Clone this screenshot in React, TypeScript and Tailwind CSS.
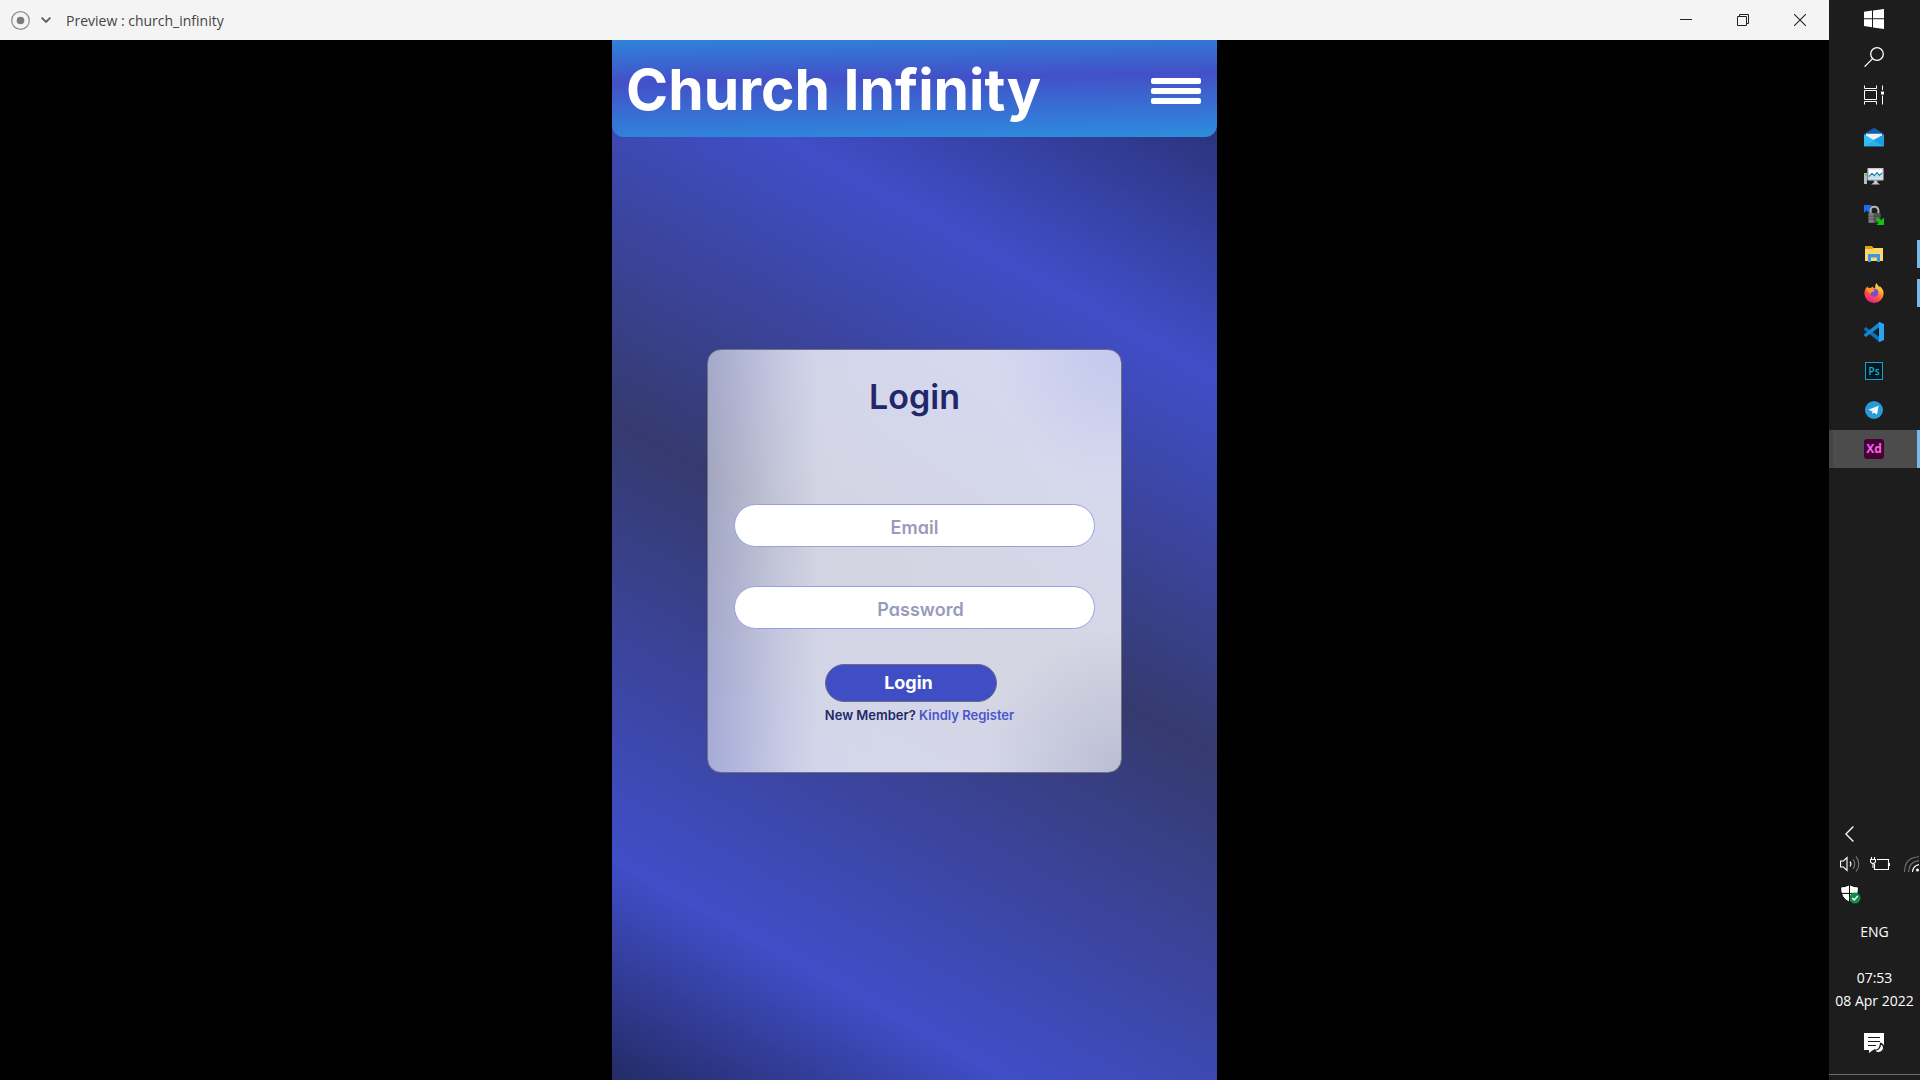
import type { ReactNode } from "react";

const StartIcon = () => (
  <svg width="20" height="20" viewBox="0 0 20 20" fill="#fff">
    <path d="M0 2.8 8 1.6V9.3H0ZM9 1.5 20 0V9.3H9ZM0 10.3H8V18.2L0 17.1ZM9 10.3H20V20L9 18.4Z" />
  </svg>
);

const SearchIcon = () => (
  <svg width="20" height="20" viewBox="0 0 20 20" fill="none" stroke="#fff" strokeWidth="1.3">
    <circle cx="13" cy="7" r="6.3" />
    <path d="M8.6 11.6.6 19.6" />
  </svg>
);

const TaskViewIcon = () => (
  <svg width="20" height="20" viewBox="0 0 20 20" fill="none" stroke="#fff" strokeWidth="1">
    <path d="M.5.5V3.5H12.5V.5M.5 19.5V16.5H12.5V19.5M.5 5.5H12.5V14.5H.5ZM18.5.5V5M18.5 10.5V19.5" />
    <rect x="17" y="6.5" width="3" height="3" fill="#fff" stroke="none" />
  </svg>
);

const MailIcon = () => (
  <svg width="20" height="20" viewBox="0 0 20 20">
    <path d="M0 7 10 .8 20 7V10H0Z" fill="#0f5fae" />
    <path d="M2 6.8H18V12L10 16 2 12Z" fill="#f1f1f1" />
    <path d="M0 7.2 20 19.2H0Z" fill="#33bdf2" />
    <path d="M20 7.2V19.2L9 13.2Z" fill="#1c9de4" />
    <path d="M20 19.2H0L10 13.4Z" fill="#2cb0ee" />
  </svg>
);

const MonitorIcon = () => (
  <svg width="20" height="20" viewBox="0 0 20 20">
    <rect x="0" y="7" width="3" height="11" fill="#b9bcbc" />
    <rect x="1" y="8" width="2" height="1.2" fill="#35c92c" />
    <rect x="3.4" y="2" width="16.2" height="12.4" rx="0.8" fill="#c7c9ca" />
    <rect x="4.8" y="3.4" width="13.4" height="9.4" fill="#fff" />
    <path d="M4.8 9.6 7.8 6.6 10.6 9.4 12.6 7.4 15 9.4 18.2 8V12.8H4.8Z" fill="#bfe3f5" />
    <path d="M4.8 10.6 8 7.4 10.4 9.6 13 6.6 15.4 9.4 18.2 6.8" fill="none" stroke="#1f78ad" strokeWidth="1.1" />
    <path d="M9.8 14.4H13.4V16.4L16 18.4H7L9.8 16.4Z" fill="#c4c6c7" />
  </svg>
);

const LockIcon = () => (
  <svg width="20" height="20" viewBox="0 0 20 20">
    <path d="M0 0H8L5.6 2.4 7.6 4.4 4.4 7.6 2.4 5.6 0 8Z" fill="#1a6cf0" />
    <path d="M6.6 9.5V5.2Q6.6 1.8 10.3 1.8T14.4 5.2V9.5" fill="none" stroke="#b4b4b4" strokeWidth="2" />
    <rect x="4.6" y="8" width="12" height="9.8" fill="#555" />
    <rect x="4.6" y="8" width="5" height="9.8" fill="#7d7d7d" />
    <path d="M4.6 11.2H16.6M4.6 14.2H16.6" stroke="#444" strokeWidth="0.6" />
    <path d="M13.6 12 17 15.2 20 12.4V20H12.4L14.8 17.4 11.6 14.4Z" fill="#10c410" />
  </svg>
);

const FolderIcon = () => (
  <svg width="20" height="20" viewBox="0 0 20 20">
    <path d="M1 2H8L9.6 4H19V8H1Z" fill="#e0a010" />
    <path d="M1 5H8L10 4H19V17H1Z" fill="#ffd766" />
    <path d="M4 18V10.6Q4 10 4.6 10H15.4Q16 10 16 10.6V18H13V13.4H7V18Z" fill="#3b97e3" />
  </svg>
);

const FirefoxIcon = () => (
  <svg width="20" height="20" viewBox="0 0 20 20">
    <defs>
      <linearGradient id="ffBody" x1="0.8" y1="0" x2="0.25" y2="1">
        <stop offset="0" stopColor="#fff14a" />
        <stop offset="0.35" stopColor="#ffa42a" />
        <stop offset="0.65" stopColor="#ff4c46" />
        <stop offset="1" stopColor="#e3189a" />
      </linearGradient>
    </defs>
    <path
      d="M3.4 3.2 4 5 7 5 8.2 3.4Q9.4 5 11 5.2 10.4 2.4 12.6 0 13.4 2.4 15.4 3.9L16 3.2Q19.6 6.4 19.6 10.6A9.6 9.4 0 0 1 .4 10.6Q.2 6.4 3.4 3.2Z"
      fill="url(#ffBody)"
    />
    <circle cx="10.2" cy="9.8" r="4.1" fill="#7a4be0" />
    <path d="M2 5.4Q4.6 4.2 7.4 5L10.8 7.6Q9.8 9 7.6 9 6.4 9.6 6.8 11.4 4 9 2 5.4Z" fill="#ff9a1f" />
  </svg>
);

const CodeIcon = () => (
  <svg width="20" height="20" viewBox="0 0 20 20">
    <path d="M0 6.6 1.8 5 15.4 15V20L.2 7.8Z" fill="#0a72bd" />
    <path d="M0 13.4 1.8 15 15.4 5V0L.2 12.2Z" fill="#1389d6" />
    <path d="M14.6.2 15.6 0 20 2V18L15.6 20 14.6 19.6 15 18.6V1.4Z" fill="#2ba4f3" />
  </svg>
);

const PhotoshopIcon = () => (
  <span className="flex h-[18px] w-[18px] items-center justify-center border border-[#14a5c8] bg-[#03181f] font-['Open_Sans',sans-serif] text-[10px] leading-none font-semibold text-[#16b4da]">
    Ps
  </span>
);

const TelegramIcon = () => (
  <svg width="18" height="18" viewBox="0 0 18 18">
    <circle cx="9" cy="9" r="9" fill="#279cd8" />
    <path d="M3.4 8.8 13.6 4.8 12 13.4 9 11.4 7.4 13 7 10.2Z" fill="#fff" />
    <path d="M7 10.2 11.4 6.6 8 10.8 7.4 13Z" fill="#b9dcf0" />
  </svg>
);

const XdIcon = () => (
  <span className="flex h-5 w-5 items-center justify-center rounded-[3px] bg-[#450135] font-['Open_Sans',sans-serif] text-[12px] leading-none font-bold text-[#f566ec]">
    Xd
  </span>
);

type App = { name: string; icon: ReactNode; running?: boolean; active?: boolean };

const shell: App[] = [
  { name: "Start", icon: <StartIcon /> },
  { name: "Search", icon: <SearchIcon /> },
  { name: "Task View", icon: <TaskViewIcon /> },
];

const apps: App[] = [
  { name: "Mail", icon: <MailIcon /> },
  { name: "System monitor", icon: <MonitorIcon /> },
  { name: "Secure transfer", icon: <LockIcon /> },
  { name: "File Explorer", icon: <FolderIcon />, running: true },
  { name: "Firefox", icon: <FirefoxIcon />, running: true },
  { name: "Visual Studio Code", icon: <CodeIcon /> },
  { name: "Photoshop", icon: <PhotoshopIcon /> },
  { name: "Telegram", icon: <TelegramIcon /> },
  { name: "Adobe XD", icon: <XdIcon />, active: true },
];

function TaskButton({ app }: { app: App }) {
  return (
    <button
      type="button"
      aria-label={app.name}
      className={
        app.active
          ? "relative flex h-[38px] w-full items-center justify-center border-l-4 border-[#444] bg-[#4c4c4c] pr-[5px]"
          : "relative flex h-[38px] w-full items-center justify-center pr-px"
      }
    >
      {app.icon}
      {app.running && <span className="absolute top-[5px] right-0 h-7 w-[3px] bg-[#76b9ed]" />}
      {app.active && <span className="absolute top-0 right-0 h-full w-[3px] bg-[#76b9ed]" />}
    </button>
  );
}

function Taskbar() {
  return (
    <aside className="flex w-[91px] shrink-0 flex-col bg-[#1d1d1d] font-['Open_Sans',sans-serif] text-white">
      {shell.map((a) => (
        <TaskButton key={a.name} app={a} />
      ))}
      <div className="mt-1 flex flex-col gap-px">
        {apps.map((a) => (
          <TaskButton key={a.name} app={a} />
        ))}
      </div>

      <div className="mt-auto flex flex-col">
        <button type="button" aria-label="Show hidden icons" className="flex h-5 w-full items-center pl-4">
          <svg width="9" height="16" viewBox="0 0 9 16" fill="none" stroke="#fff" strokeWidth="1.3">
            <path d="M8.4.5.9 8 8.4 15.5" />
          </svg>
        </button>
        <div className="flex h-10 items-center gap-2.5 overflow-hidden pl-[11px]">
          <svg className="shrink-0" width="20" height="18" viewBox="0 0 20 18" fill="none" stroke="#fff" strokeWidth="1.1">
            <path d="M.6 6H3.4L7 2.6V15.4L3.4 12H.6Z" />
            <path d="M10 6.6Q11.8 9 10 11.4" />
            <path d="M13 4.2Q16.4 9 13 13.8M16 1.4Q21.6 9 16 16.6" stroke="#777" />
          </svg>
          <svg className="shrink-0" width="20" height="16" viewBox="0 0 20 16" fill="none" stroke="#fff" strokeWidth="1.1">
            <path d="M7 3.5H18.5V13.5H4.5V8M19.5 7V10M1.5 1V3M4.5 1V3M.5 3.5H5.5V6L3.8 7.5H2.2L.5 6ZM3 7.5V12" />
          </svg>
          <svg className="ml-1 shrink-0" width="15" height="16" viewBox="0 0 15 16" fill="none" strokeWidth="1.1">
            <path d="M.6 16Q.6 1.4 15 .8M4.6 16Q5 5.8 15 4.6" stroke="#777" />
            <path d="M8.4 16Q9 9.6 15 8.6" stroke="#fff" />
            <circle cx="13.5" cy="14" r="1.5" fill="#fff" />
          </svg>
        </div>
        <div className="flex h-5 items-center pl-[11px]">
          <svg width="21" height="20" viewBox="0 0 21 20">
            <path d="M9.5.6Q13 3 18.6 3 19 14 9.5 18.4 0 14 .6 3 6 3 9.5.6Z" fill="#fff" stroke="#000" />
            <path d="M9.5 1V18M1 9.4H18" stroke="#000" />
            <circle cx="15" cy="14" r="5.5" fill="#128a48" />
            <path d="M12.3 14 14.2 16 17.8 12" fill="none" stroke="#fff" strokeWidth="1.4" />
          </svg>
        </div>
        <div className="flex h-[54px] items-center justify-center text-[14px]">ENG</div>
        <div className="mt-2 text-center text-[14px] leading-[23px] whitespace-nowrap">
          <div>07:53</div>
          <div>08 Apr 2022</div>
        </div>
        <button type="button" aria-label="Notifications" className="flex h-[62px] items-center justify-center">
          <svg width="21" height="21" viewBox="0 0 21 21">
            <path d="M0 0H20V17H9L5 20V17H0Z" fill="#fff" />
            <path d="M4 4.5H16M4 8.5H16M4 12.5H12" stroke="#1d1d1d" strokeWidth="1.2" />
            <path d="M16.6 10.4Q20.4 12 19.4 16 17.6 20.4 12.6 19.4 11 18.6 10.6 17 16 17.6 16.6 10.4Z" fill="#fff" stroke="#1d1d1d" strokeWidth="1.3" />
          </svg>
        </button>
        <div className="h-1.5 border-t border-[#6c6c6c]" />
      </div>
    </aside>
  );
}

function TitleBar() {
  return (
    <header className="flex h-10 shrink-0 items-center bg-[#f4f4f4] pr-px pl-[11px] text-[#444]">
      <svg width="19" height="19" viewBox="0 0 19 19">
        <circle cx="9.5" cy="9.5" r="8.8" fill="none" stroke="#8c8c8c" strokeWidth="1.2" />
        <circle cx="9.5" cy="9.5" r="3.8" fill="#7a7a7a" />
      </svg>
      <button type="button" aria-label="Artboards" className="ml-[11px]">
        <svg width="10" height="6" viewBox="0 0 10 6" fill="none" stroke="#5c5c5c" strokeWidth="1.8">
          <path d="M.6.6 5 5 9.4.6" />
        </svg>
      </button>
      <h1 className="ml-[15px] font-['Open_Sans',sans-serif] text-[14px]">Preview : church_infinity</h1>
      <div className="ml-auto flex">
        <button type="button" aria-label="Minimize" className="flex h-10 w-[57px] items-center justify-center">
          <svg width="12" height="12" viewBox="0 0 12 12" stroke="#222">
            <path d="M0 5.5H12" />
          </svg>
        </button>
        <button type="button" aria-label="Restore" className="flex h-10 w-[57px] items-center justify-center">
          <svg width="12" height="12" viewBox="0 0 12 12" fill="none" stroke="#222">
            <path d="M.5 2.5H9.5V11.5H.5ZM2.5 2.5V.5H11.5V9.5H9.5" />
          </svg>
        </button>
        <button type="button" aria-label="Close" className="flex h-10 w-[57px] items-center justify-center">
          <svg width="12" height="12" viewBox="0 0 12 12" stroke="#222" strokeWidth="1.1">
            <path d="M0 0 12 12M12 0 0 12" />
          </svg>
        </button>
      </div>
    </header>
  );
}

function LoginCard() {
  const field =
    "block h-[43px] w-full rounded-full border border-[#98a0e4] bg-white pt-1 pr-6 text-center text-[18px] font-semibold text-[#272c6b] outline-none placeholder:text-[#999bbc] placeholder:opacity-100";
  return (
    <form
      onSubmit={(e) => e.preventDefault()}
      className="flex w-full max-w-[415px] flex-col rounded-[14px] border border-[#6f6f80] bg-[radial-gradient(circle_at_100%_0%,rgba(64,78,200,0.13),rgba(64,78,200,0)_22%),radial-gradient(circle_at_100%_100%,rgba(60,60,130,0.17),rgba(60,60,130,0)_24%),linear-gradient(90deg,rgba(250,251,255,0.56)_0%,rgba(250,251,255,0.63)_8%,rgba(250,251,255,0.72)_17%,rgba(250,251,255,0.8)_27%,rgba(250,251,255,0.81)_100%)] px-[26px] pb-12 text-[#22276a]"
    >
      <h2 className="mt-[26px] text-center text-[34px] leading-[42px] font-semibold">Login</h2>
      <input aria-label="Email" type="email" placeholder="Email" className={field + " mt-[86px] pl-6"} />
      <input aria-label="Password" type="password" placeholder="Password" className={field + " mt-[39px] pl-9"} />
      <div className="mt-[35px] flex justify-center">
        <button
          type="submit"
          className="mr-2 h-[38px] w-[172px] rounded-full border border-[#6a6a80] bg-[#404ec6] pr-1 text-[18px] leading-none font-bold text-white"
        >
          Login
        </button>
      </div>
      <p className="mt-1 pl-2.5 text-center text-[13px] leading-[18px] font-semibold">
        New Member?{" "}
        <a href="#register" className="text-[#4a55cc]">
          Kindly Register
        </a>
      </p>
    </form>
  );
}

export default function App() {
  return (
    <div className="flex min-h-screen bg-black">
      <div className="flex min-w-0 flex-1 flex-col">
        <TitleBar />
        <main className="mx-auto flex w-full max-w-[605px] flex-1 flex-col bg-[linear-gradient(209deg,#232a60_0%,#404ec8_24.5%,#353a6e_52%,#404ec8_84%,#242b66_100%)] font-['Inter',sans-serif] [font-feature-settings:'cv11']">
          <div className="flex h-[97px] items-center justify-between rounded-b-xl bg-[linear-gradient(179deg,#2f83da_0%,#4350c8_40%,#2c8ddd_100%)] pr-4 pl-3.5">
            <span className="pt-0.5 text-[57px] leading-none font-bold whitespace-nowrap text-white">
              Church Infinity
            </span>
            <button type="button" aria-label="Menu" className="flex w-[50px] flex-col gap-1 pt-1">
              <span className="h-1.5 w-full rounded-[2px] bg-white" />
              <span className="h-1.5 w-full rounded-[2px] bg-white" />
              <span className="h-1.5 w-full rounded-[2px] bg-white" />
            </button>
          </div>
          <div className="flex flex-1 flex-col items-center px-4 pt-[212px]">
            <LoginCard />
          </div>
        </main>
      </div>
      <Taskbar />
    </div>
  );
}
